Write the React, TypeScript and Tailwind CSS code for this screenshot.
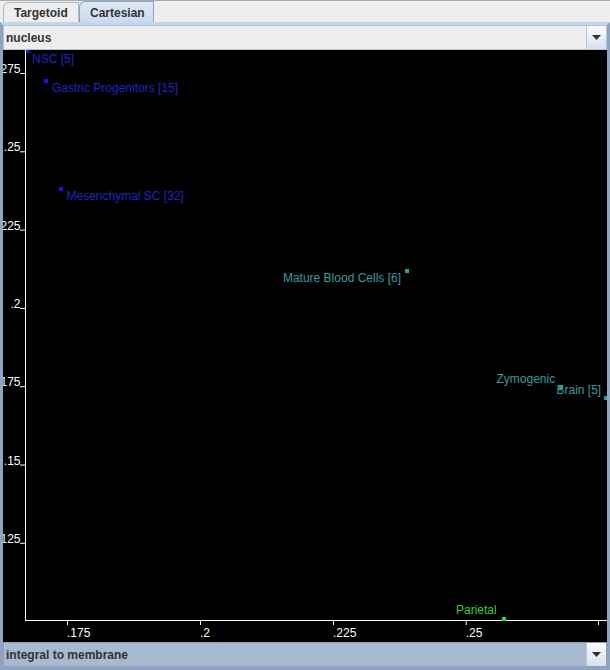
import React from 'react';

const font = "'Liberation Sans', Arial, sans-serif";

const yTicks = ['.275', '.25', '.225', '.2', '.175', '.15', '.125'];
const xTicks = [
  { x: 64, label: '.175' },
  { x: 197, label: '.2' },
  { x: 330, label: '.225' },
  { x: 462.7, label: '.25' },
  { x: 595, label: '' },
];

type Pt = { px: number; py: number; color: string };
type Lbl = { x: number; y: number; text: string; color: string; anchor?: 'start' | 'end' };

const BLUE = '#2424c2';
const BLUE_PT = '#1414ee';
const TEAL = '#389d9d';
const TEAL_PT = '#1fa3a3';
const GREEN = '#3ccc3c';
const GREEN_PT = '#22dd22';

// page coords minus (3, 50)
const points: Pt[] = [
  { px: 23, py: -1, color: BLUE_PT },
  { px: 41, py: 29, color: BLUE_PT },
  { px: 56, py: 137, color: BLUE_PT },
  { px: 402, py: 219, color: TEAL_PT },
  { px: 556, py: 335, color: TEAL_PT },
  { px: 601, py: 346, color: TEAL_PT },
  { px: 499, py: 567, color: GREEN_PT },
];

const labels: Lbl[] = [
  { x: 29, y: 12.5, text: 'NSC [5]', color: BLUE },
  { x: 49, y: 42, text: 'Gastric Progenitors [15]', color: BLUE },
  { x: 63.5, y: 150, text: 'Mesenchymal SC [32]', color: BLUE },
  { x: 398, y: 232, text: 'Mature Blood Cells [6]', color: TEAL, anchor: 'end' },
  { x: 493.5, y: 332.5, text: 'Zymogenic', color: TEAL },
  { x: 553.5, y: 344, text: 'Brain [5]', color: TEAL },
  { x: 453, y: 564, text: 'Parietal', color: GREEN },
];

function Arrow() {
  return (
    <svg width="9" height="5" viewBox="0 0 9 5">
      <path d="M0 0 H9 L4.5 5 Z" fill="#333" />
    </svg>
  );
}

function Combo({ text, active }: { text: string; active?: boolean }) {
  return (
    <div
      className={
        'h-[25px] flex items-stretch border ' +
        (active ? 'bg-[#a8bacf] border-[#8c9fb9]' : 'bg-[#eeeeee] border-[#b3c3d7]')
      }
    >
      <div className="flex-1 flex items-center pl-[2px] text-[12px] font-bold text-[#333333]">{text}</div>
      <div className="w-[20px] flex items-center justify-center border-l border-[#b8c7da] bg-gradient-to-b from-[#fbfcfe] to-[#d6e1ee]">
        <Arrow />
      </div>
    </div>
  );
}

function Plot() {
  return (
    <div className="flex-1 bg-black overflow-hidden">
      <svg width="604" height="592" style={{ fontFamily: font }} className="block">
        <line x1="22.5" y1="0" x2="22.5" y2="571" stroke="#fff" />
        <line x1="22" y1="570.5" x2="604" y2="570.5" stroke="#fff" />
        {yTicks.map((t, i) => {
          const y = 23 + 78.3 * i;
          return (
            <g key={t}>
              <text x="17.5" y={y} fontSize="12" fill="#fff" textAnchor="end">
                {t}
              </text>
              <line x1="17" y1={y + 0.5} x2="22" y2={y + 0.5} stroke="#fff" />
            </g>
          );
        })}
        {xTicks.map((t) => (
          <g key={t.x}>
            <line x1={t.x + 0.5} y1="570" x2={t.x + 0.5} y2="575" stroke="#fff" />
            <text x={t.x} y="587" fontSize="12" fill="#fff">
              {t.label}
            </text>
          </g>
        ))}
        {points.map((p, i) => (
          <rect key={i} x={p.px} y={p.py} width="4" height="4" fill={p.color} />
        ))}
        {labels.map((l) => (
          <text key={l.text} x={l.x} y={l.y} fontSize="12" fill={l.color} textAnchor={l.anchor ?? 'start'}>
            {l.text}
          </text>
        ))}
      </svg>
    </div>
  );
}

export default function App() {
  return (
    <div className="w-[610px] h-[670px] bg-[#eeeeee] flex flex-col overflow-hidden" style={{ fontFamily: font }}>
      <div className="h-[22px] flex items-end pl-[3px] border-t border-[#a9a9a9]">
        <div className="h-[20px] w-[76px] flex items-center pl-[10px] pt-[1px] text-[12px] font-bold text-[#333333] bg-[#eeeeee] border border-b-0 border-[#a6b6cb] rounded-tl-[6px]">
          Targetoid
        </div>
        <div className="h-[21px] w-[75px] flex items-center pl-[10px] pt-[1px] text-[12px] font-bold text-[#333333] bg-gradient-to-b from-[#dde8f5] to-[#c9dbef] border border-b-0 border-[#8ea3c0] rounded-tl-[6px]">
          Cartesian
        </div>
      </div>
      <div className="flex-1 flex flex-col border-x-[3px] border-b-[3px] border-t-[3px] border-[#8fa4c0] border-t-[#c4d6ec]">
        <Combo text="nucleus" />
        <Plot />
        <Combo text="integral to membrane" active />
      </div>
    </div>
  );
}
